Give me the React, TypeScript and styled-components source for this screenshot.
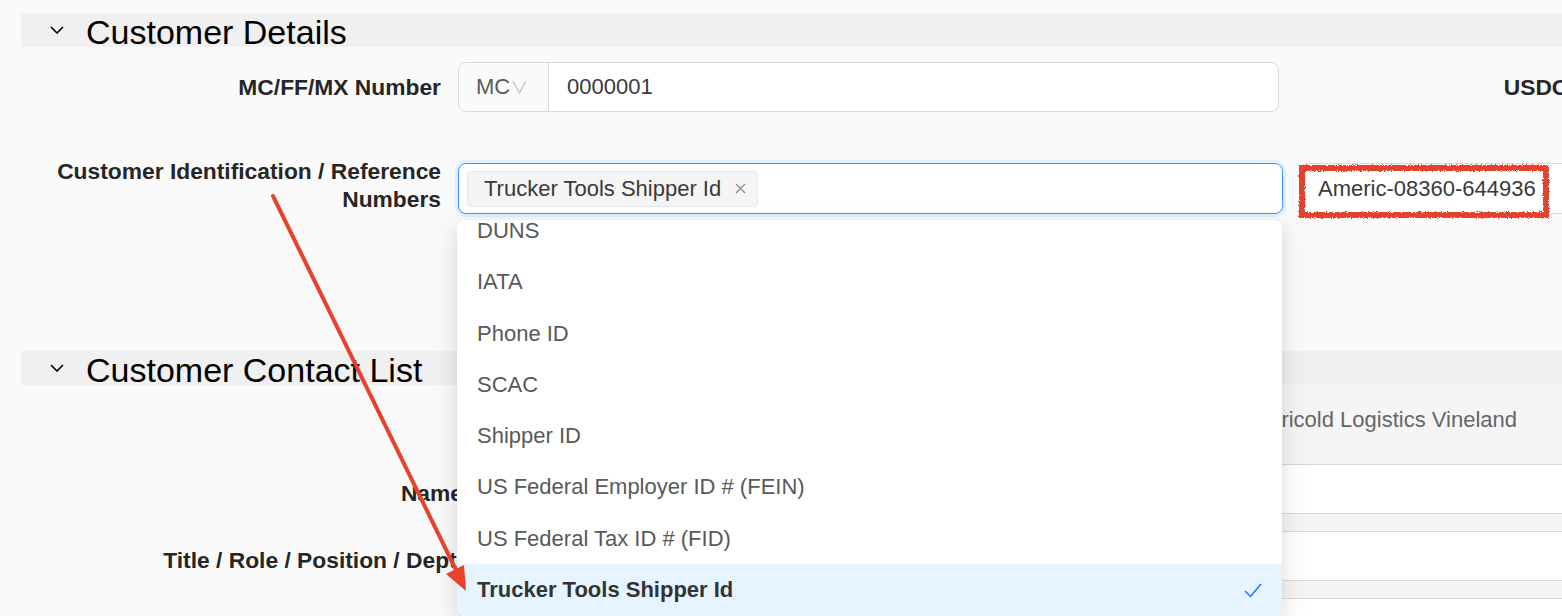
import React, { useLayoutEffect, useRef } from "react";
import styled, { createGlobalStyle } from "styled-components";

const GlobalStyle = createGlobalStyle`
  html, body {
    margin: 0;
    padding: 0;
    background: #fafafa;
    overflow: hidden;
  }
  body {
    font-family: "Liberation Sans", Arial, Helvetica, sans-serif;
    color: #262626;
  }
  * { box-sizing: border-box; }
`;

const Page = styled.div`
  width: 1562px;
  height: 616px;
  padding: 13px 0 0 21px;
  position: relative;
`;

const SectionHeader = styled.div`
  height: 34px;
  background: #f0f0f0;
  display: flex;
  align-items: center;
  gap: 22px;
  padding-left: 29px;
`;

const SectionTitle = styled.h2`
  margin: 0;
  padding-top: 3px;
  font-size: 34px;
  font-weight: 400;
  line-height: 34px;
  color: #000;
  white-space: nowrap;
`;

const FormRow = styled.div<{ $top: number; $align?: string }>`
  margin-top: ${(p) => p.$top}px;
  display: flex;
  align-items: ${(p) => p.$align ?? "center"};
  gap: 17px;
`;

const FieldLabel = styled.label<{ $width?: number }>`
  width: ${(p) => p.$width ?? 420}px;
  flex-shrink: 0;
  text-align: right;
  font-size: 22.8px;
  font-weight: 700;
  line-height: 28px;
  color: #262626;
  white-space: nowrap;
`;

const LabelBlock = styled(FieldLabel)`
  white-space: normal;
  margin-top: -6px;
`;

const InputGroup = styled.div`
  width: 821px;
  height: 50px;
  flex-shrink: 0;
  display: flex;
  border: 1px solid #d9d9d9;
  border-radius: 8px;
  background: #fff;
  overflow: hidden;
`;

const Addon = styled.div`
  width: 90px;
  display: flex;
  align-items: center;
  gap: 2px;
  padding-left: 17px;
  background: #fafafa;
  border-right: 1px solid #d9d9d9;
  font-size: 22px;
  color: #595959;
`;

const TextValue = styled.div<{ $pad?: number }>`
  display: flex;
  align-items: center;
  padding-left: ${(p) => p.$pad ?? 18}px;
  font-size: 22px;
  color: #3a3a3a;
  white-space: nowrap;
`;

const ControlArea = styled.div`
  display: flex;
  gap: 16px;
  flex-shrink: 0;
`;

const SelectWrap = styled.div`
  position: relative;
  width: 825px;
  flex-shrink: 0;
`;

const SelectBox = styled.div`
  height: 51px;
  display: flex;
  align-items: center;
  padding: 0 8px;
  border: 1px solid #4096ff;
  border-radius: 8px;
  background: #fff;
  box-shadow: 0 0 0 3px rgba(5, 145, 255, 0.1);
`;

const Tag = styled.span`
  height: 36px;
  display: inline-flex;
  align-items: center;
  gap: 14px;
  padding: 0 11px 0 16px;
  background: #f5f5f5;
  border: 1px solid #e8e8e8;
  border-radius: 4px;
  font-size: 22px;
  color: #3a3a3a;
  white-space: nowrap;
`;

const PlainInput = styled.div`
  width: 420px;
  height: 51px;
  flex-shrink: 0;
  display: flex;
  border: 1px solid #d9d9d9;
  border-radius: 8px;
  background: #fff;
`;

const Dropdown = styled.div`
  position: absolute;
  top: calc(100% + 6px);
  left: -1px;
  width: 825px;
  height: 396px;
  overflow: hidden;
  padding: 4px 0;
  background: #fff;
  border-radius: 8px;
  box-shadow: 0 6px 16px 0 rgba(0, 0, 0, 0.08),
    0 3px 6px -4px rgba(0, 0, 0, 0.12), 0 9px 28px 8px rgba(0, 0, 0, 0.05);
  z-index: 10;
`;

const Option = styled.div<{ $selected?: boolean }>`
  height: 51.3px;
  display: flex;
  align-items: center;
  justify-content: space-between;
  padding: 0 20px;
  font-size: 22px;
  color: ${(p) => (p.$selected ? "#333" : "#595959")};
  font-weight: ${(p) => (p.$selected ? 700 : 400)};
  background: ${(p) => (p.$selected ? "#e6f4ff" : "transparent")};
  white-space: nowrap;
`;

const Spacer = styled.div<{ $h: number }>`
  height: ${(p) => p.$h}px;
`;

const ContactGrid = styled.div`
  display: grid;
  grid-template-columns: 442px 1fr;
  column-gap: 16px;
  margin-right: -12px;
`;

const CompanyBox = styled.div`
  height: 79px;
  display: flex;
  align-items: center;
  justify-content: flex-end;
  padding: 0 57px 10px 0;
  background: #f5f5f5;
  font-size: 22px;
  color: #666;
  white-space: nowrap;
`;

const ContactLabel = styled(FieldLabel)`
  width: auto;
  line-height: 50px;
  padding-top: 4px;
`;

const ControlCell = styled.div`
  background: #f5f5f5;
  padding-bottom: 17px;
`;

const ContactInput = styled.div`
  height: 50px;
  background: #fff;
  border: 1px solid #d9d9d9;
`;

const Overlay = styled.svg`
  position: absolute;
  inset: 0;
  pointer-events: none;
  z-index: 20;
`;

const Chevron = ({ color = "#000", w = 14, h = 8, sw = 1.6 }) => (
  <svg width={w} height={h} viewBox={`0 0 ${w} ${h}`} fill="none">
    <path d={`M1 1 L${w / 2} ${h - 1} L${w - 1} 1`} stroke={color} strokeWidth={sw} />
  </svg>
);

const CloseX = () => (
  <svg width="11" height="11" viewBox="0 0 11 11" fill="none">
    <path d="M1 1 L10 10 M10 1 L1 10" stroke="#8c8c8c" strokeWidth="1.3" />
  </svg>
);

const Check = () => (
  <svg width="18" height="15" viewBox="0 0 18 15" fill="none">
    <path d="M1 8 L6.5 13.5 L17 1" stroke="#1677ff" strokeWidth="1.5" />
  </svg>
);

const options = [
  "DOT Number",
  "DUNS",
  "IATA",
  "Phone ID",
  "SCAC",
  "Shipper ID",
  "US Federal Employer ID # (FEIN)",
  "US Federal Tax ID # (FID)",
  "Trucker Tools Shipper Id",
];

export default function App() {
  const listRef = useRef<HTMLDivElement>(null);

  useLayoutEffect(() => {
    if (listRef.current) listRef.current.scrollTop = 70;
  }, []);

  return (
    <>
      <GlobalStyle />
      <Page>
        <SectionHeader>
          <Chevron />
          <SectionTitle>Customer Details</SectionTitle>
        </SectionHeader>

        <FormRow $top={15}>
          <FieldLabel>MC/FF/MX Number</FieldLabel>
          <InputGroup>
            <Addon>
              MC
              <Chevron color="#bfbfbf" w={15} h={14} sw={1.2} />
            </Addon>
            <TextValue>0000001</TextValue>
          </InputGroup>
          <FieldLabel $width={380}>USDOT Number</FieldLabel>
        </FormRow>

        <FormRow $top={51} $align="flex-start">
          <LabelBlock>Customer Identification / Reference Numbers</LabelBlock>
          <ControlArea>
            <SelectWrap>
              <SelectBox>
                <Tag>
                  Trucker Tools Shipper Id
                  <CloseX />
                </Tag>
              </SelectBox>
              <Dropdown ref={listRef}>
                {options.map((o) => {
                  const selected = o === "Trucker Tools Shipper Id";
                  return (
                    <Option key={o} $selected={selected}>
                      {o}
                      {selected && <Check />}
                    </Option>
                  );
                })}
              </Dropdown>
            </SelectWrap>
            <PlainInput>
              <TextValue>Americ-08360-644936</TextValue>
            </PlainInput>
          </ControlArea>
        </FormRow>

        <Spacer $h={137} />

        <SectionHeader>
          <Chevron />
          <SectionTitle>Customer Contact List</SectionTitle>
        </SectionHeader>

        <ContactGrid>
          <div />
          <CompanyBox>Americold Logistics Vineland</CompanyBox>
          <ContactLabel>Name</ContactLabel>
          <ControlCell>
            <ContactInput />
          </ControlCell>
          <ContactLabel>Title / Role / Position / Dept.</ContactLabel>
          <ControlCell>
            <ContactInput />
          </ControlCell>
          <ContactLabel>Email</ContactLabel>
          <ControlCell>
            <ContactInput />
          </ControlCell>
        </ContactGrid>

        <Overlay width="1562" height="616" viewBox="0 0 1562 616">
          <defs>
            <filter id="rough" x="-5%" y="-20%" width="110%" height="140%">
              <feTurbulence type="fractalNoise" baseFrequency="0.8" numOctaves="2" result="n" />
              <feDisplacementMap in="SourceGraphic" in2="n" scale="4" />
            </filter>
          </defs>
          <rect
            x="1302"
            y="168"
            width="244"
            height="47"
            fill="none"
            stroke="#e5432d"
            strokeWidth="6"
            filter="url(#rough)"
          />
          <line x1="273" y1="196" x2="457" y2="572" stroke="#e8412c" strokeWidth="4" strokeLinecap="round" />
          <polygon points="466,591 464,565 446,574" fill="#e8412c" />
        </Overlay>
      </Page>
    </>
  );
}
